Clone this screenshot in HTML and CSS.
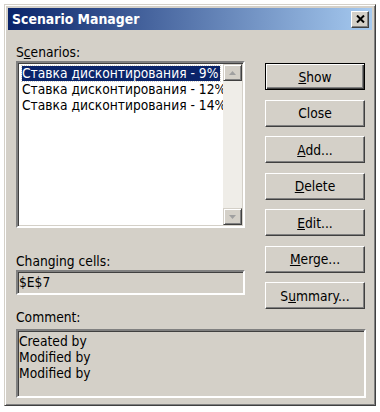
FILE: index.html
```html
<!DOCTYPE html>
<html lang="en">
<head>
    <meta charset="UTF-8">
    <title>Scenario Manager</title>
    <link rel="stylesheet" href="styles.css">
</head>
<body>

<div class="window">
    <!-- Title bar -->
    <div class="titlebar">
        <span class="title">Scenario Manager</span>
        <button class="close-x" aria-label="Close">
            <svg width="9" height="8" viewBox="0 0 9 8">
                <path d="M1 0.5 L8 7.5 M8 0.5 L1 7.5" stroke="#000" stroke-width="2" fill="none"/>
            </svg>
        </button>
    </div>

    <div class="content">
        <div class="main">
            <!-- Left column -->
            <div class="left">
                <div class="label">S<u>c</u>enarios:</div>
                <div class="listbox">
                    <div class="items">
                        <div class="item selected"><span>Ставка дисконтирования - 9%</span></div>
                        <div class="item"><span>Ставка дисконтирования - 12%</span></div>
                        <div class="item"><span>Ставка дисконтирования - 14%</span></div>
                    </div>
                    <div class="scrollbar">
                        <div class="arrow">
                            <svg width="7" height="4" viewBox="0 0 7 4"><path d="M3.5 0 L7 4 L0 4 Z" fill="#a0a0a0"/></svg>
                        </div>
                        <div class="track"></div>
                        <div class="arrow">
                            <svg width="7" height="4" viewBox="0 0 7 4"><path d="M0 0 L7 0 L3.5 4 Z" fill="#a0a0a0"/></svg>
                        </div>
                    </div>
                </div>
                <div class="label label-cells">Changing cells:</div>
                <div class="field">$E$7</div>
            </div>

            <!-- Buttons -->
            <div class="buttons">
                <button class="btn default"><u>S</u>how</button>
                <button class="btn">Close</button>
                <button class="btn"><u>A</u>dd...</button>
                <button class="btn"><u>D</u>elete</button>
                <button class="btn"><u>E</u>dit...</button>
                <button class="btn"><u>M</u>erge...</button>
                <button class="btn">S<u>u</u>mmary...</button>
            </div>
        </div>

        <div class="label label-comment">Comment:</div>
        <div class="comment">
            Created by<br>
            Modified by<br>
            Modified by
        </div>
    </div>
</div>

</body>
</html>
```

FILE: styles.css
```css
/* Basic reset */
* {
    margin: 0;
    padding: 0;
    box-sizing: border-box;
}
body {
    background-color: #fff;
    font-family: "DejaVu Sans Condensed", "DejaVu Sans", sans-serif;
    font-size: 13.7px;
    color: #000;
}

/* Dialog window */
.window {
    width: 372px;
    height: 402px;
    margin: 4px 0 0 4px;
    padding: 3px;
    background-color: #d4d0c8;
    border: 1px solid;
    border-color: #d4d0c8 #404040 #404040 #d4d0c8;
    box-shadow: inset 1px 1px #fff, inset -1px -1px #808080;
}

/* Title bar */
.titlebar {
    display: flex;
    align-items: center;
    justify-content: space-between;
    height: 22px;
    padding: 0 3px 0 4px;
    background: linear-gradient(to right, #0a246a, #a6caf0);
}
.title {
    color: #fff;
    font-weight: bold;
    font-size: 13.9px;
}
.close-x {
    display: flex;
    align-items: center;
    justify-content: center;
    width: 18px;
    height: 17px;
    background-color: #d4d0c8;
    border: 1px solid;
    border-color: #fff #404040 #404040 #fff;
    box-shadow: inset -1px -1px #808080;
}

/* Content */
.content {
    padding: 14px 6px 0 8px;
}
.label {
    height: 17px;
    line-height: 16px;
}
.main {
    display: grid;
    grid-template-columns: 229px 100px;
    column-gap: 20px;
    align-items: start;
}

/* List of scenarios */
.listbox {
    display: flex;
    height: 167px;
    background-color: #fff;
    border: 2px solid;
    border-color: #808080 #fff #fff #808080;
    box-shadow: inset 1px 1px #404040, inset -1px -1px #d4d0c8;
    padding: 1px;
}
.items {
    flex: 1;
    min-width: 0;
    overflow: hidden;
    padding: 2px 0 0 2px;
}
.item {
    height: 16px;
    line-height: 15px;
    white-space: nowrap;
    padding-left: 1px;
}
.item.selected span {
    display: inline-block;
    background-color: #0a246a;
    color: #fff;
    outline: 1px dotted #d4d0c8;
    padding-right: 2px;
}
.scrollbar {
    display: flex;
    flex-direction: column;
    width: 19px;
}
.track {
    flex: 1;
    background-color: #efede8;
}
.arrow {
    display: flex;
    align-items: center;
    justify-content: center;
    height: 17px;
    background-color: #d4d0c8;
    border: 1px solid;
    border-color: #d4d0c8 #404040 #404040 #d4d0c8;
    box-shadow: inset 1px 1px #fff, inset -1px -1px #808080;
}

/* Changing cells */
.label-cells {
    margin-top: 25px;
}
.field {
    height: 25px;
    line-height: 20px;
    padding-left: 1px;
    border: 2px solid;
    border-color: #808080 #fff #fff #808080;
    box-shadow: inset 1px 1px #404040, inset -1px -1px #d4d0c8;
}

/* Buttons */
.buttons {
    display: flex;
    flex-direction: column;
    gap: 9.5px;
    padding-top: 19px;
}
.btn {
    height: 27px;
    font-family: inherit;
    font-size: 13.7px;
    background-color: #d4d0c8;
    border: 1px solid;
    border-color: #fff #404040 #404040 #fff;
    box-shadow: inset -1px -1px #808080;
}
.btn.default {
    border: 1px solid #000;
    box-shadow: inset 1px 1px #fff, inset -1px -1px #404040, inset -2px -2px #808080;
}

/* Comment */
.label-comment {
    margin-top: 0;
    margin-bottom: 3px;
}
.comment {
    width: 350px;
    height: 69px;
    line-height: 16px;
    padding: 2px 1px;
    border: 2px solid;
    border-color: #808080 #fff #fff #808080;
    box-shadow: inset 1px 1px #404040, inset -1px -1px #d4d0c8;
}
```
